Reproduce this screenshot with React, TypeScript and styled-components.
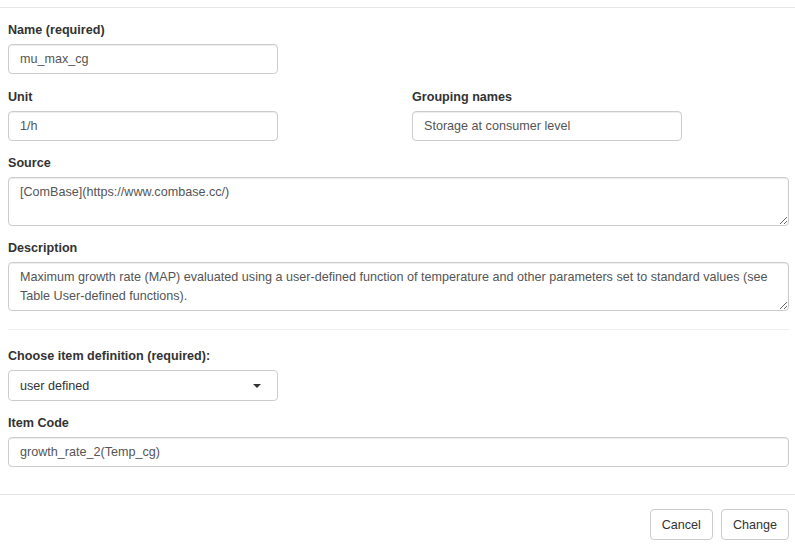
import React from "react";
import styled, { createGlobalStyle } from "styled-components";

const Global = createGlobalStyle`
  html, body { margin: 0; padding: 0; background: #fff; }
  body { font-family: "Liberation Sans", Arial, Helvetica, sans-serif; font-size: 12.6px; color: #333; }
  * { box-sizing: border-box; }
`;

const Modal = styled.div`
  width: 795px;
  height: 545px;
  display: flex;
  flex-direction: column;
  padding-top: 7px;
  background: #fff;
`;

const Body = styled.div`
  border-top: 1px solid #e5e5e5;
  padding: 12px 6px 0 8px;
  display: flex;
  flex-direction: column;
`;

const Group = styled.div<{ $mb?: number }>`
  display: flex;
  flex-direction: column;
  margin-bottom: ${(p) => (p.$mb ?? 12)}px;
`;

const Row = styled.div`
  display: grid;
  grid-template-columns: 377px 1fr;
  column-gap: 27px;
`;

const Label = styled.label`
  font-weight: 700;
  font-size: 12.6px;
  line-height: 19px;
  padding-top: 1px;
  color: #333;
  margin-bottom: 4px;
`;

const Input = styled.input<{ $full?: boolean }>`
  width: ${(p) => (p.$full ? "100%" : "270px")};
  height: 30px;
  padding: 6px 11px;
  font-family: inherit;
  font-size: 12.6px;
  color: #555;
  border: 1px solid #ccc;
  border-radius: 4px;
  box-shadow: inset 0 1px 1px rgba(0,0,0,0.075);
  outline: none;
  background: #fff;
`;

const TextArea = styled.textarea`
  width: 100%;
  height: 49px;
  padding: 5px 11px;
  font-family: inherit;
  font-size: 12.6px;
  line-height: 19px;
  color: #555;
  border: 1px solid #ccc;
  border-radius: 4px;
  box-shadow: inset 0 1px 1px rgba(0,0,0,0.075);
  outline: none;
  resize: vertical;
  display: block;
  margin: 0;
  overflow: hidden;
`;

const Divider = styled.hr`
  border: 0;
  border-top: 1px solid #eee;
  margin: 18px 0 16px 0;
  width: 100%;
`;

const Select = styled.div`
  width: 270px;
  height: 31px;
  border: 1px solid #ccc;
  border-radius: 4px;
  display: flex;
  align-items: center;
  justify-content: space-between;
  padding: 0 16px 0 11px;
  color: #333;
  font-size: 12.6px;
  background: #fff;
`;

const Caret = styled.span`
  width: 0;
  height: 0;
  border-left: 4px solid transparent;
  border-right: 4px solid transparent;
  border-top: 4px solid #333;
`;

const Footer = styled.div`
  margin-top: 27px;
  border-top: 1px solid #e5e5e5;
  padding: 14px 6px 0 8px;
  display: flex;
  justify-content: flex-end;
  gap: 8px;
`;

const Button = styled.button`
  height: 31px;
  padding: 0 11px;
  font-family: inherit;
  font-size: 12.6px;
  color: #333;
  background: #fff;
  border: 1px solid #ccc;
  border-radius: 4px;
  cursor: pointer;
`;

export default function App() {
  return (
    <>
      <Global />
      <Modal>
        <Body>
          <Group $mb={13}>
            <Label>Name (required)</Label>
            <Input readOnly value="mu_max_cg" />
          </Group>
          <Row>
            <Group>
              <Label>Unit</Label>
              <Input readOnly value="1/h" />
            </Group>
            <Group>
              <Label>Grouping names</Label>
              <Input readOnly value="Storage at consumer level" />
            </Group>
          </Row>
          <Group>
            <Label>Source</Label>
            <TextArea readOnly value="[ComBase](https://www.combase.cc/)" />
          </Group>
          <Group $mb={0}>
            <Label>Description</Label>
            <TextArea
              readOnly
              value="Maximum growth rate (MAP) evaluated using a user-defined function of temperature and other parameters set to standard values (see Table User-defined functions)."
            />
          </Group>
          <Divider />
          <Group>
            <Label>Choose item definition (required):</Label>
            <Select>
              <span>user defined</span>
              <Caret />
            </Select>
          </Group>
          <Group $mb={0}>
            <Label>Item Code</Label>
            <Input $full readOnly value="growth_rate_2(Temp_cg)" />
          </Group>
        </Body>
        <Footer>
          <Button>Cancel</Button>
          <Button>Change</Button>
        </Footer>
      </Modal>
    </>
  );
}
